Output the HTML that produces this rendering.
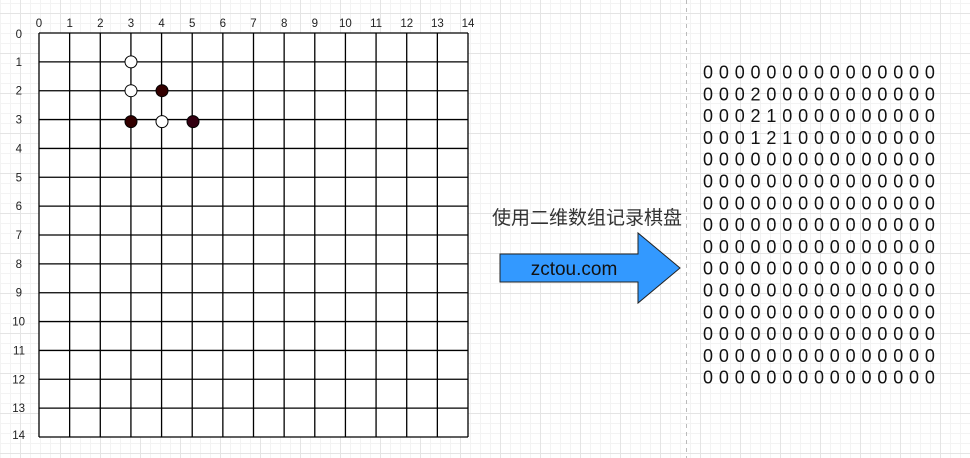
<!DOCTYPE html>
<html><head><meta charset="utf-8"><style>
html,body{margin:0;padding:0;}
body{width:970px;height:458px;overflow:hidden;position:relative;background-color:#fff;
background-image:
linear-gradient(to right,#e4e4e4 1px,transparent 1px),
linear-gradient(to bottom,#e4e4e4 1px,transparent 1px),
linear-gradient(to right,#f3f3f3 1px,transparent 1px),
linear-gradient(to bottom,#f3f3f3 1px,transparent 1px);
background-size:40px 40px,40px 40px,10px 10px,10px 10px;
background-position:20px 0,0 13px,0 0,0 3px;
font-family:"Liberation Sans","Noto Sans CJK SC",sans-serif;}
svg{position:absolute;left:0;top:0;}
</style></head><body>
<svg width="970" height="458" xmlns="http://www.w3.org/2000/svg" font-family="Liberation Sans, Noto Sans CJK SC, sans-serif">
<line x1="686.5" y1="0" x2="686.5" y2="458" stroke="#bbb" stroke-dasharray="4,4"/>
<rect x="39" y="33" width="429" height="404" fill="#fff"/>
<g id="grid" stroke="#000" stroke-width="1.3"></g>
<g id="labels" font-size="11.5" fill="#222"></g>
<circle cx="131" cy="61.9" r="6" fill="#fff" stroke="#000" stroke-width="1"/>
<circle cx="131" cy="90.7" r="6" fill="#fff" stroke="#000" stroke-width="1"/>
<circle cx="162" cy="90.7" r="6" fill="#330000" stroke="#000" stroke-width="1"/>
<circle cx="131" cy="121.6" r="6" fill="#330000" stroke="#000" stroke-width="1"/>
<circle cx="162" cy="121.6" r="6" fill="#fff" stroke="#000" stroke-width="1"/>
<circle cx="193" cy="121.6" r="6" fill="#330011" stroke="#000" stroke-width="1"/>
<text x="587" y="224" font-size="19" fill="#333" text-anchor="middle">使用二维数组记录棋盘</text>
<polygon points="500,254 638,254 638,233 680,268 638,303 638,282 500,282" fill="#3399ff" stroke="#222" stroke-width="1"/>
<text x="574" y="275" font-size="19" fill="#111" text-anchor="middle">zctou.com</text>
<g id="mat" font-size="18" fill="#111"></g>
</svg>
<script>
var ns="http://www.w3.org/2000/svg";
var g=document.getElementById('grid'),L=document.getElementById('labels'),M=document.getElementById('mat');
function el(p,t,a){var e=document.createElementNS(ns,t);for(var k in a)e.setAttribute(k,a[k]);p.appendChild(e);return e;}
for(var i=0;i<15;i++){
 var x=39+i*429/14,y=33+i*404/14;
 el(g,'line',{x1:x,y1:33,x2:x,y2:437});
 el(g,'line',{x1:39,y1:y,x2:468,y2:y});
 var t=el(L,'text',{x:x,y:27,'text-anchor':'middle'});t.textContent=i;
 var ry=i==0?38:(i==14?439:y+4);
 var t2=el(L,'text',{x:i>=10?25:22,y:ry,'text-anchor':'end'});t2.textContent=i;
}
var rows=[];for(var r=0;r<15;r++){var a=[];for(var c=0;c<15;c++)a.push(0);rows.push(a);}
rows[1][3]=2;rows[2][3]=2;rows[2][4]=1;rows[3][3]=1;rows[3][4]=2;rows[3][5]=1;
for(var r=0;r<15;r++){for(var c=0;c<15;c++){var t=el(M,'text',{x:703+c*15.85,y:78.5+r*21.8});t.textContent=rows[r][c];}}
</script>
</body></html>
